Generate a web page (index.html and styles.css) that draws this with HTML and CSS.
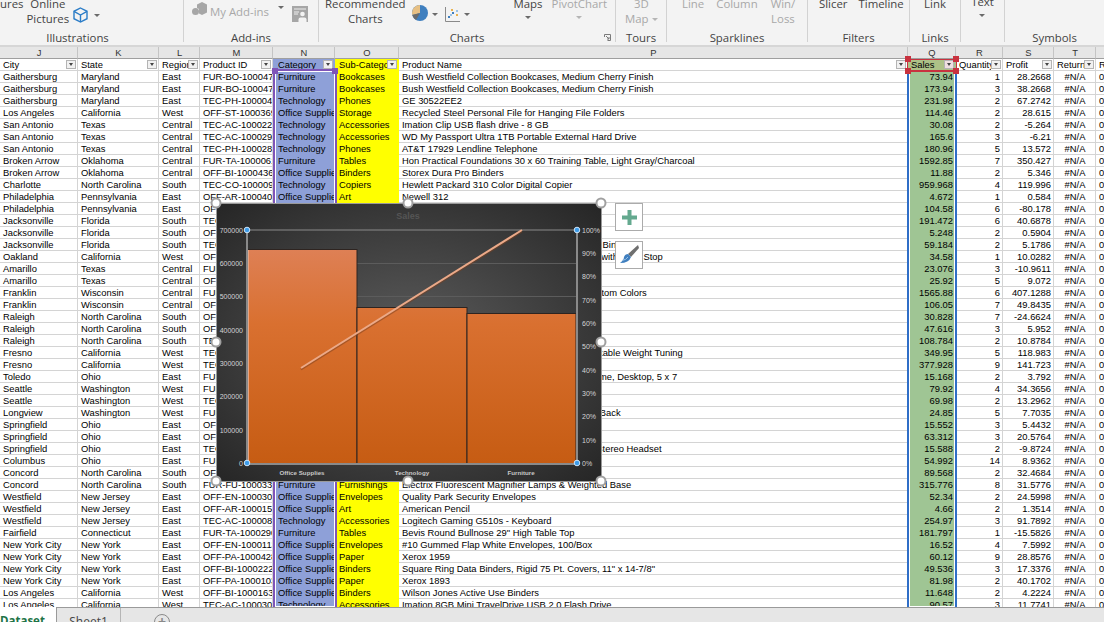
FILE: index.html
```html
<!DOCTYPE html>
<html lang="en">
<head>
    <meta charset="UTF-8">
    <title>Dataset - Excel</title>
    <link rel="stylesheet" href="styles.css">
</head>
<body>

<div class="ribbon">
    <section class="group g-illustrations">
        <div class="tools">
            <span class="tool">ures</span>
            <span class="tool online">Online<br>Pictures</span>
            <svg class="icon cube" width="15" height="16" viewBox="0 0 15 16" fill="none" stroke="#2a7cc7" stroke-width="1.4"><path d="M7.5 1 14 4.3v7.4L7.5 15 1 11.7V4.3Z"/><path d="M1 4.3 7.5 8 14 4.3M7.5 8v7"/></svg>
            <i class="caret cube-caret"></i>
        </div>
        <div class="group-name">Illustrations</div>
    </section>
    <section class="group g-addins">
        <div class="tools">
            <svg class="icon store" width="15" height="14" viewBox="0 0 15 14" fill="#a6a6a6"><circle cx="3.5" cy="9.5" r="3.5"/><path d="M5 2.5 10 0l5 2.5v8L10 13l-3-1.5V7L5 6Z"/></svg>
            <span class="tool off my-addins">My Add-ins</span>
            <i class="caret addins-caret"></i>
            <svg class="icon person" width="16" height="16" viewBox="0 0 16 16"><rect width="16" height="16" fill="#a6a6a6"/><path d="M2 3h12M2 6h5M2 8h4" stroke="#eee"/><circle cx="10.5" cy="8" r="2.3" fill="#f3f3f3"/><path d="M6.500 16v-2.500q0-2 2-2h4q2 0 2 2V16Z" fill="#f3f3f3"/></svg>
        </div>
        <div class="group-name">Add-ins</div>
    </section>
    <section class="group g-charts">
        <div class="tools">
            <span class="tool recommended">Recommended<br>Charts</span>
            <svg class="icon pie" width="16" height="16" viewBox="0 0 16 16"><circle cx="8" cy="8" r="8" fill="#3f7fbf"/><path d="M8 8V0A8 8 0 0 0 .3 10Z" fill="#e8c083"/><path d="M8 8 .3 10A8 8 0 0 0 4 15Z" fill="#6b6b6b"/></svg>
            <i class="caret pie-caret"></i>
            <svg class="icon scatter" width="15" height="15" viewBox="0 0 15 15"><path d="M.5 0v14.500H15" fill="none" stroke="#8a8a8a"/><path d="M3 9h2v2H3zM7 5h2v2H7z" fill="#3f7fbf"/><path d="M6 2h2v2H6zM11 7h2v2h-2z" fill="#e8b24f"/><path d="M11 3h2v2h-2zM5 7h2v2H5z" fill="#9cc3e6"/></svg>
            <i class="caret scatter-caret"></i>
            <span class="tool stacked maps">Maps<i class="caret"></i></span>
            <span class="tool stacked off pivot">PivotChart<i class="caret off"></i></span>
        </div>
        <div class="group-name">Charts</div>
        <svg class="launcher" width="7" height="7" viewBox="0 0 7 7" fill="none" stroke="#7a7a7a"><path d="M.5 3V.5h6v6H3.500M2 2l3 3M5 3v2H3"/></svg>
    </section>
    <section class="group g-tours">
        <div class="tools">
            <span class="tool off map3d">3D<br>Map<i class="caret off"></i></span>
        </div>
        <div class="group-name">Tours</div>
    </section>
    <section class="group g-sparklines">
        <div class="tools">
            <span class="tool off line">Line</span>
            <span class="tool off column">Column</span>
            <span class="tool off winloss">Win/<br>Loss</span>
        </div>
        <div class="group-name">Sparklines</div>
    </section>
    <section class="group g-filters">
        <div class="tools">
            <span class="tool slicer">Slicer</span>
            <span class="tool timeline">Timeline</span>
        </div>
        <div class="group-name">Filters</div>
    </section>
    <section class="group g-links">
        <div class="tools centered">
            <span class="tool">Link</span>
        </div>
        <div class="group-name">Links</div>
    </section>
    <section class="group g-text">
        <div class="tools centered">
            <span class="tool stacked up">Text<i class="caret"></i></span>
        </div>
        <div class="group-name">&nbsp;</div>
    </section>
    <section class="group g-symbols">
        <div class="tools"></div>
        <div class="group-name">Symbols</div>
    </section>
</div>

<div class="sheet">
    <table class="grid">
        <colgroup>
            <col class="c-j"><col class="c-k"><col class="c-l"><col class="c-m"><col class="c-n"><col class="c-o">
            <col class="c-p"><col class="c-q"><col class="c-r"><col class="c-s"><col class="c-t"><col class="c-u">
        </colgroup>
        <thead>
            <tr class="letters">
                <th>J</th><th>K</th><th>L</th><th>M</th><th>N</th><th>O</th><th>P</th><th>Q</th><th>R</th><th>S</th><th>T</th><th></th>
            </tr>
            <tr class="names">
                <th><div class="head"><span>City</span><i class="filter"></i></div></th>
                <th><div class="head"><span>State</span><i class="filter"></i></div></th>
                <th><div class="head"><span>Region</span><i class="filter"></i></div></th>
                <th><div class="head"><span>Product ID</span><i class="filter"></i></div></th>
                <th><div class="head"><span>Category</span><i class="filter"></i></div></th>
                <th><div class="head"><span>Sub-Category</span><i class="filter"></i></div></th>
                <th><div class="head"><span>Product Name</span><i class="filter"></i></div></th>
                <th><div class="head"><span>Sales</span><i class="filter"></i></div></th>
                <th><div class="head"><span>Quantity</span><i class="filter"></i></div></th>
                <th><div class="head"><span>Profit</span><i class="filter"></i></div></th>
                <th><div class="head"><span>Returned</span><i class="filter"></i></div></th>
                <th><div class="head"><span>Rate</span></div></th>
            </tr>
        </thead>
        <tbody>
            <tr><td>Gaithersburg</td><td>Maryland</td><td>East</td><td>FUR-BO-10004709</td><td>Furniture</td><td>Bookcases</td><td>Bush Westfield Collection Bookcases, Medium Cherry Finish</td><td>73.94</td><td>1</td><td>28.2668</td><td>#N/A</td><td>0</td></tr>
            <tr><td>Gaithersburg</td><td>Maryland</td><td>East</td><td>FUR-BO-10004709</td><td>Furniture</td><td>Bookcases</td><td>Bush Westfield Collection Bookcases, Medium Cherry Finish</td><td>173.94</td><td>3</td><td>38.2668</td><td>#N/A</td><td>0</td></tr>
            <tr><td>Gaithersburg</td><td>Maryland</td><td>East</td><td>TEC-PH-10000455</td><td>Technology</td><td>Phones</td><td>GE 30522EE2</td><td>231.98</td><td>2</td><td>67.2742</td><td>#N/A</td><td>0</td></tr>
            <tr><td>Los Angeles</td><td>California</td><td>West</td><td>OFF-ST-10003692</td><td>Office Supplies</td><td>Storage</td><td>Recycled Steel Personal File for Hanging File Folders</td><td>114.46</td><td>2</td><td>28.615</td><td>#N/A</td><td>0</td></tr>
            <tr><td>San Antonio</td><td>Texas</td><td>Central</td><td>TEC-AC-10002218</td><td>Technology</td><td>Accessories</td><td>Imation Clip USB flash drive - 8 GB</td><td>30.08</td><td>2</td><td>-5.264</td><td>#N/A</td><td>0</td></tr>
            <tr><td>San Antonio</td><td>Texas</td><td>Central</td><td>TEC-AC-10002942</td><td>Technology</td><td>Accessories</td><td>WD My Passport Ultra 1TB Portable External Hard Drive</td><td>165.6</td><td>3</td><td>-6.21</td><td>#N/A</td><td>0</td></tr>
            <tr><td>San Antonio</td><td>Texas</td><td>Central</td><td>TEC-PH-10002890</td><td>Technology</td><td>Phones</td><td>AT&amp;T 17929 Lendline Telephone</td><td>180.96</td><td>5</td><td>13.572</td><td>#N/A</td><td>0</td></tr>
            <tr><td>Broken Arrow</td><td>Oklahoma</td><td>Central</td><td>FUR-TA-10000617</td><td>Furniture</td><td>Tables</td><td>Hon Practical Foundations 30 x 60 Training Table, Light Gray/Charcoal</td><td>1592.85</td><td>7</td><td>350.427</td><td>#N/A</td><td>0</td></tr>
            <tr><td>Broken Arrow</td><td>Oklahoma</td><td>Central</td><td>OFF-BI-10004364</td><td>Office Supplies</td><td>Binders</td><td>Storex Dura Pro Binders</td><td>11.88</td><td>2</td><td>5.346</td><td>#N/A</td><td>0</td></tr>
            <tr><td>Charlotte</td><td>North Carolina</td><td>South</td><td>TEC-CO-10000971</td><td>Technology</td><td>Copiers</td><td>Hewlett Packard 310 Color Digital Copier</td><td>959.968</td><td>4</td><td>119.996</td><td>#N/A</td><td>0</td></tr>
            <tr><td>Philadelphia</td><td>Pennsylvania</td><td>East</td><td>OFF-AR-10004078</td><td>Office Supplies</td><td>Art</td><td>Newell 312</td><td>4.672</td><td>1</td><td>0.584</td><td>#N/A</td><td>0</td></tr>
            <tr><td>Philadelphia</td><td>Pennsylvania</td><td>East</td><td>OFF-BI-10003291</td><td>Office Supplies</td><td>Binders</td><td></td><td>104.58</td><td>6</td><td>-80.178</td><td>#N/A</td><td>0</td></tr>
            <tr><td>Jacksonville</td><td>Florida</td><td>South</td><td>TEC-PH-10002033</td><td>Technology</td><td>Phones</td><td></td><td>191.472</td><td>6</td><td>40.6878</td><td>#N/A</td><td>0</td></tr>
            <tr><td>Jacksonville</td><td>Florida</td><td>South</td><td>OFF-AR-10001868</td><td>Office Supplies</td><td>Art</td><td></td><td>5.248</td><td>2</td><td>0.5904</td><td>#N/A</td><td>0</td></tr>
            <tr><td>Jacksonville</td><td>Florida</td><td>South</td><td>TEC-AC-10004353</td><td>Technology</td><td>Accessories</td><td>Plantronics Savi W720-M Multi-Device Wireless Binaural</td><td>59.184</td><td>2</td><td>5.1786</td><td>#N/A</td><td>0</td></tr>
            <tr><td>Oakland</td><td>California</td><td>West</td><td>OFF-AP-10002203</td><td>Office Supplies</td><td>Appliances</td><td>Eldon Fold 'N Roll Cart Storage System Unit 14 with Door Stop</td><td>34.58</td><td>1</td><td>10.0282</td><td>#N/A</td><td>0</td></tr>
            <tr><td>Amarillo</td><td>Texas</td><td>Central</td><td>FUR-FU-10001967</td><td>Furniture</td><td>Furnishings</td><td></td><td>23.076</td><td>3</td><td>-10.9611</td><td>#N/A</td><td>0</td></tr>
            <tr><td>Amarillo</td><td>Texas</td><td>Central</td><td>OFF-PA-10002377</td><td>Office Supplies</td><td>Paper</td><td></td><td>25.92</td><td>5</td><td>9.072</td><td>#N/A</td><td>0</td></tr>
            <tr><td>Franklin</td><td>Wisconsin</td><td>Central</td><td>FUR-CH-10004218</td><td>Furniture</td><td>Chairs</td><td>Global Deluxe Tall Stacking Chair, Assorted Custom Colors</td><td>1565.88</td><td>6</td><td>407.1288</td><td>#N/A</td><td>0</td></tr>
            <tr><td>Franklin</td><td>Wisconsin</td><td>Central</td><td>OFF-ST-10001469</td><td>Office Supplies</td><td>Storage</td><td></td><td>106.05</td><td>7</td><td>49.8435</td><td>#N/A</td><td>0</td></tr>
            <tr><td>Raleigh</td><td>North Carolina</td><td>South</td><td>OFF-PA-10000474</td><td>Office Supplies</td><td>Paper</td><td></td><td>30.828</td><td>7</td><td>-24.6624</td><td>#N/A</td><td>0</td></tr>
            <tr><td>Raleigh</td><td>North Carolina</td><td>South</td><td>OFF-LA-10003930</td><td>Office Supplies</td><td>Labels</td><td></td><td>47.616</td><td>3</td><td>5.952</td><td>#N/A</td><td>0</td></tr>
            <tr><td>Raleigh</td><td>North Carolina</td><td>South</td><td>TEC-PH-10001530</td><td>Technology</td><td>Phones</td><td></td><td>108.784</td><td>2</td><td>10.8784</td><td>#N/A</td><td>0</td></tr>
            <tr><td>Fresno</td><td>California</td><td>West</td><td>TEC-AC-10000710</td><td>Technology</td><td>Accessories</td><td>Logitech G500 Laser Gaming Mouse with Adjustable Weight Tuning</td><td>349.95</td><td>5</td><td>118.983</td><td>#N/A</td><td>0</td></tr>
            <tr><td>Fresno</td><td>California</td><td>West</td><td>TEC-PH-10004093</td><td>Technology</td><td>Phones</td><td></td><td>377.928</td><td>9</td><td>141.723</td><td>#N/A</td><td>0</td></tr>
            <tr><td>Toledo</td><td>Ohio</td><td>East</td><td>FUR-FU-10004351</td><td>Furniture</td><td>Furnishings</td><td>Tensor Brushed Steel A4 Document Picture Frame, Desktop, 5 x 7</td><td>15.168</td><td>2</td><td>3.792</td><td>#N/A</td><td>0</td></tr>
            <tr><td>Seattle</td><td>Washington</td><td>West</td><td>FUR-FU-10002671</td><td>Furniture</td><td>Furnishings</td><td></td><td>79.92</td><td>4</td><td>34.3656</td><td>#N/A</td><td>0</td></tr>
            <tr><td>Seattle</td><td>Washington</td><td>West</td><td>TEC-AC-10001838</td><td>Technology</td><td>Accessories</td><td></td><td>69.98</td><td>2</td><td>13.2962</td><td>#N/A</td><td>0</td></tr>
            <tr><td>Longview</td><td>Washington</td><td>West</td><td>FUR-FU-10000246</td><td>Furniture</td><td>Furnishings</td><td>Anti-Static Chairmat with Studded Ribbed Vinyl Back</td><td>24.85</td><td>5</td><td>7.7035</td><td>#N/A</td><td>0</td></tr>
            <tr><td>Springfield</td><td>Ohio</td><td>East</td><td>OFF-PA-10001560</td><td>Office Supplies</td><td>Paper</td><td></td><td>15.552</td><td>3</td><td>5.4432</td><td>#N/A</td><td>0</td></tr>
            <tr><td>Springfield</td><td>Ohio</td><td>East</td><td>OFF-EN-10002986</td><td>Office Supplies</td><td>Envelopes</td><td></td><td>63.312</td><td>3</td><td>20.5764</td><td>#N/A</td><td>0</td></tr>
            <tr><td>Springfield</td><td>Ohio</td><td>East</td><td>TEC-AC-10001432</td><td>Technology</td><td>Accessories</td><td>Plantronics Voyager Focus UC USB Bluetooth Stereo Headset</td><td>15.588</td><td>2</td><td>-9.8724</td><td>#N/A</td><td>0</td></tr>
            <tr><td>Columbus</td><td>Ohio</td><td>East</td><td>FUR-FU-10000758</td><td>Furniture</td><td>Furnishings</td><td></td><td>54.992</td><td>14</td><td>8.9362</td><td>#N/A</td><td>0</td></tr>
            <tr><td>Concord</td><td>North Carolina</td><td>South</td><td>OFF-BI-10001524</td><td>Office Supplies</td><td>Binders</td><td></td><td>89.568</td><td>2</td><td>32.4684</td><td>#N/A</td><td>0</td></tr>
            <tr><td>Concord</td><td>North Carolina</td><td>South</td><td>FUR-FU-10003373</td><td>Furniture</td><td>Furnishings</td><td>Electrix Fluorescent Magnifier Lamps &amp; Weighted Base</td><td>315.776</td><td>8</td><td>31.5776</td><td>#N/A</td><td>0</td></tr>
            <tr><td>Westfield</td><td>New Jersey</td><td>East</td><td>OFF-EN-10003040</td><td>Office Supplies</td><td>Envelopes</td><td>Quality Park Security Envelopes</td><td>52.34</td><td>2</td><td>24.5998</td><td>#N/A</td><td>0</td></tr>
            <tr><td>Westfield</td><td>New Jersey</td><td>East</td><td>OFF-AR-10001573</td><td>Office Supplies</td><td>Art</td><td>American Pencil</td><td>4.66</td><td>2</td><td>1.3514</td><td>#N/A</td><td>0</td></tr>
            <tr><td>Westfield</td><td>New Jersey</td><td>East</td><td>TEC-AC-10000844</td><td>Technology</td><td>Accessories</td><td>Logitech Gaming G510s - Keyboard</td><td>254.97</td><td>3</td><td>91.7892</td><td>#N/A</td><td>0</td></tr>
            <tr><td>Fairfield</td><td>Connecticut</td><td>East</td><td>FUR-TA-10002903</td><td>Furniture</td><td>Tables</td><td>Bevis Round Bullnose 29" High Table Top</td><td>181.797</td><td>1</td><td>-15.5826</td><td>#N/A</td><td>0</td></tr>
            <tr><td>New York City</td><td>New York</td><td>East</td><td>OFF-EN-10001137</td><td>Office Supplies</td><td>Envelopes</td><td>#10 Gummed Flap White Envelopes, 100/Box</td><td>16.52</td><td>4</td><td>7.5992</td><td>#N/A</td><td>0</td></tr>
            <tr><td>New York City</td><td>New York</td><td>East</td><td>OFF-PA-10004285</td><td>Office Supplies</td><td>Paper</td><td>Xerox 1959</td><td>60.12</td><td>9</td><td>28.8576</td><td>#N/A</td><td>0</td></tr>
            <tr><td>New York City</td><td>New York</td><td>East</td><td>OFF-BI-10002225</td><td>Office Supplies</td><td>Binders</td><td>Square Ring Data Binders, Rigid 75 Pt. Covers, 11" x 14-7/8"</td><td>49.536</td><td>3</td><td>17.3376</td><td>#N/A</td><td>0</td></tr>
            <tr><td>New York City</td><td>New York</td><td>East</td><td>OFF-PA-10001033</td><td>Office Supplies</td><td>Paper</td><td>Xerox 1893</td><td>81.98</td><td>2</td><td>40.1702</td><td>#N/A</td><td>0</td></tr>
            <tr><td>Los Angeles</td><td>California</td><td>West</td><td>OFF-BI-10001634</td><td>Office Supplies</td><td>Binders</td><td>Wilson Jones Active Use Binders</td><td>11.648</td><td>2</td><td>4.2224</td><td>#N/A</td><td>0</td></tr>
            <tr><td>Los Angeles</td><td>California</td><td>West</td><td>TEC-AC-10003027</td><td>Technology</td><td>Accessories</td><td>Imation 8GB Mini TravelDrive USB 2.0 Flash Drive</td><td>90.57</td><td>3</td><td>11.7741</td><td>#N/A</td><td>0</td></tr>
        </tbody>
    </table>

    <!-- formula reference highlights -->
    <div class="ref ref-category"><i class="grip grip-l"></i><i class="grip grip-r"></i></div>
    <div class="ref ref-sales"></div>
    <div class="ref-head"><i class="grip grip-tl"></i><i class="grip grip-tr"></i><i class="grip grip-l"></i><i class="grip grip-r"></i></div>

    <svg class="chart" width="386" height="279" viewBox="0 0 386 279">
        <defs>
            <radialGradient id="chartBg" cx="50%" cy="50%" r="70%">
                <stop offset="0" stop-color="#5c5c5c"/>
                <stop offset="1" stop-color="#262626"/>
            </radialGradient>
            <linearGradient id="barFill" gradientUnits="userSpaceOnUse" x1="0" y1="46" x2="0" y2="260">
                <stop offset="0" stop-color="#de8055"/>
                <stop offset="0.35" stop-color="#d97030"/>
                <stop offset="1" stop-color="#c65c13"/>
            </linearGradient>
        </defs>
        <rect x="0.5" y="0.5" width="385" height="278" rx="3" fill="url(#chartBg)" stroke="#9a9a9a"/>
        <text class="chart-title" x="192" y="16" text-anchor="middle">Sales</text>
        <path d="M31 60.5h330M31 93.5h330M31 127h330M31 160h330M31 193.5h330M31 227h330" stroke="#5c5c5c"/>
        <path d="M31 27h330" stroke="#8a8a8a"/>
        <rect x="31" y="46.5" width="110" height="214" fill="url(#barFill)" stroke="#2e2420"/>
        <rect x="141" y="104.5" width="110" height="156" fill="url(#barFill)" stroke="#2e2420"/>
        <rect x="251" y="110.5" width="109" height="150" fill="url(#barFill)" stroke="#2e2420"/>
        <path d="M32.500 47v212" stroke="#e6a585"/>
        <path d="M31 27V261H361V27" fill="none" stroke="#8a8a8a" stroke-width="2"/>
        <path d="M85 166.500 306 28.500" stroke="#7a4020" stroke-width="2" opacity="0.5"/>
        <path d="M85 165 306 27" stroke="#eba988" stroke-width="2"/>
        <g class="axis-label" text-anchor="end">
            <text x="27" y="30">700000</text><text x="27" y="63">600000</text><text x="27" y="96">500000</text><text x="27" y="130">400000</text>
            <text x="27" y="163">300000</text><text x="27" y="196">200000</text><text x="27" y="230">100000</text><text x="27" y="263">0</text>
        </g>
        <g class="axis-label">
            <text x="366" y="30">100%</text><text x="366" y="53">90%</text><text x="366" y="76">80%</text><text x="366" y="100">70%</text><text x="366" y="123">60%</text><text x="366" y="146">50%</text>
            <text x="366" y="170">40%</text><text x="366" y="193">30%</text><text x="366" y="216">20%</text><text x="366" y="240">10%</text><text x="366" y="263">0%</text>
        </g>
        <g class="cat-label" text-anchor="middle">
            <text x="86" y="272">Office Supplies</text><text x="196" y="272">Technology</text><text x="305" y="272">Furniture</text>
        </g>
        <g fill="#3d9be8" stroke="#cfe6fa">
            <circle cx="31" cy="27" r="2.8"/><circle cx="361" cy="27" r="2.8"/><circle cx="31" cy="260" r="2.8"/><circle cx="361" cy="260" r="2.8"/>
        </g>
        <g fill="#fff" stroke="#a0a0a0" stroke-width="2">
            <circle cx="0" cy="0" r="4.500"/><circle cx="192" cy="0" r="4.500"/><circle cx="385" cy="0" r="4.500"/>
            <circle cx="0" cy="139" r="4.500"/><circle cx="385" cy="139" r="4.500"/>
            <circle cx="0" cy="278" r="4.500"/><circle cx="192" cy="278" r="4.500"/><circle cx="385" cy="278" r="4.500"/>
        </g>
    </svg>

    <div class="chart-btn btn-plus">
        <svg width="15" height="15" viewBox="0 0 15 15" fill="#64a98f"><path d="M5.500 0h4v5.500H15v4H9.500V15h-4V9.500H0v-4h5.500Z"/></svg>
    </div>
    <div class="chart-btn btn-brush">
        <svg width="20" height="20" viewBox="0 0 20 20"><path d="M19 0 20 3 12 12 9 9Z" fill="#6f6f6f"/><path d="M9 9 12 12Q10 18 1 18 5 15 5 12 6 9 9 9Z" fill="#3f7fbf"/><path d="M3 15.500Q7 15 9 12" stroke="#9cc3e6" fill="none"/></svg>
    </div>
</div>

<div class="tabs">
    <div class="tab active">Dataset</div>
    <div class="tab">Sheet1</div>
    <div class="add-sheet">+</div>
</div>

</body>
</html>
```

FILE: styles.css
```css
body {
    margin: 0;
    height: 622px;
    overflow: hidden;
    background: #fff;
    font-family: "Liberation Sans", Arial, sans-serif;
    color: #000;
}

/* ribbon */
.ribbon {
    display: flex;
    height: 47px;
    box-sizing: border-box;
    background: #f3f3f3;
    border-bottom: 2px solid #d6d6d6;
    font-family: "Open Sans", sans-serif;
    font-size: 11.4px;
    color: #444;
    overflow: hidden;
}
.group {
    position: relative;
    display: flex;
    flex-direction: column;
    flex: none;
    height: 42px;
    box-sizing: border-box;
    border-right: 1px solid #d2d2d2;
}
.g-illustrations { width: 212px; margin-left: -28px; }
.g-illustrations .tools { padding-left: 28px; }
.g-addins { width: 135px; }
.g-charts { width: 297px; }
.g-tours { width: 51px; }
.g-sparklines { width: 141px; }
.g-filters { width: 102px; }
.g-links { width: 51px; }
.g-text { width: 44px; }
.g-symbols { flex: 1; border-right: 0; }
.tools {
    flex: 1;
    display: flex;
    align-items: flex-start;
    margin-top: -4px;
    line-height: 15px;
    min-height: 0;
}
.tools.centered { justify-content: center; }
.group-name {
    height: 11px;
    line-height: 13px;
    text-align: center;
}
.tool {
    text-align: center;
    white-space: nowrap;
}
.tool.off { color: #a8a8a8; }
.tool.stacked {
    display: flex;
    flex-direction: column;
    align-items: center;
}
.tool.stacked .caret { margin-top: 5px; }
.tool.up { margin-top: -2px; }
.caret {
    display: inline-block;
    width: 0;
    height: 0;
    border-left: 3px solid transparent;
    border-right: 3px solid transparent;
    border-top: 3px solid #6a6a6a;
}
.caret.off { border-top-color: #b5b5b5; }
.icon { flex: none; }

.online { margin-left: 3px; }
.cube { margin: 11px 0 0 4px; }
.cube-caret { margin: 18px 0 0 6px; }
.store { margin: 6px 0 0 8px; }
.my-addins { margin: 8px 0 0 3px; }
.addins-caret { margin: 10px 0 0 9px; }
.person { margin: 10px 0 0 8px; }
.recommended { margin-left: 6px; }
.pie { margin: 9px 0 0 6px; }
.pie-caret { margin: 17px 0 0 4px; }
.scatter { margin: 11px 0 0 7px; }
.scatter-caret { margin: 17px 0 0 4px; }
.maps { margin-left: 44px; }
.pivot { margin-left: 9px; }
.launcher { position: absolute; right: 4px; bottom: 1px; }
.map3d { margin-left: 9px; }
.map3d .caret { margin-left: 3px; vertical-align: middle; }
.line { margin-left: 15px; }
.column { margin-left: 12px; }
.winloss { margin-left: 13px; }
.slicer { margin-left: 11px; }
.timeline { margin-left: 11px; }

/* sheet */
.sheet {
    position: relative;
    height: 560px;
    overflow: hidden;
}
.grid {
    table-layout: fixed;
    width: 1156px;
    border-collapse: separate;
    border-spacing: 0;
    font-size: 9.4px;
}
.c-j { width: 78px; }
.c-k { width: 81px; }
.c-l { width: 41px; }
.c-m { width: 73px; }
.c-n { width: 62px; }
.c-o { width: 64px; }
.c-p { width: 509px; }
.c-q { width: 48px; }
.c-r { width: 47px; }
.c-s { width: 51px; }
.c-t { width: 42px; }
.c-u { width: 60px; }

.grid th, .grid td {
    height: 12px;
    box-sizing: border-box;
    padding: 0 2px 0 3px;
    line-height: 11px;
    border-right: 1px solid #d4d4d4;
    border-bottom: 1px solid #d4d4d4;
    overflow: hidden;
    white-space: nowrap;
    text-align: left;
    font-weight: normal;
}
.letters th {
    background: #e6e6e6;
    border-right-color: #c4c4c4;
    border-bottom-color: #9f9f9f;
    text-align: center;
    color: #333;
}
.names th { padding: 0 1px 0 3px; }
.head {
    display: flex;
    align-items: center;
}
.head span {
    flex: 1;
    min-width: 0;
    overflow: hidden;
}
.filter {
    position: relative;
    flex: none;
    width: 10px;
    height: 9px;
    box-sizing: border-box;
    background: #f1f1f1;
    border: 1px solid #b4b4b4;
}
.filter::after {
    content: "";
    position: absolute;
    left: 2px;
    top: 2px;
    border-left: 2px solid transparent;
    border-right: 2px solid transparent;
    border-top: 3px solid #444;
}

/* coloured columns */
.names th:nth-child(5), .grid td:nth-child(5) {
    background: #8ea0d8;
    border-color: #8ea0d8;
}
.names th:nth-child(6), .grid td:nth-child(6) {
    background: #ff0;
    border-color: #ff0;
}
.grid td:nth-child(6) { padding-left: 4px; }
.names th:nth-child(5) { padding-left: 5px; }
.names th:nth-child(6) { padding-left: 4px; }
.names th:nth-child(8), .grid td:nth-child(8) {
    background: #9fc594;
    border-color: #9fc594;
}
.names th:nth-child(8) { background: #adc187; }
.names th:nth-child(8) .filter { background: #f0dfe2; }
.grid td:nth-child(8), .grid td:nth-child(9), .grid td:nth-child(10) { text-align: right; }
.grid td:nth-child(11) { text-align: center; }
.grid td:nth-child(5) { padding-left: 5px; }

/* reference highlights */
.ref {
    position: absolute;
    bottom: 0;
    box-sizing: border-box;
    box-shadow: inset 0 0 0 1px #fff;
}
.ref-category {
    left: 273px;
    top: 22px;
    width: 64px;
    border: 2px solid #7f55b8;
    border-bottom: 0;
}
.ref-sales {
    left: 907px;
    top: 24px;
    width: 50px;
    border-left: 2px solid #2f6ec7;
    border-right: 2px solid #2f6ec7;
}
.ref-head {
    position: absolute;
    left: 907px;
    top: 12px;
    width: 50px;
    height: 13px;
    box-sizing: border-box;
    border: 1px solid #c8323f;
    border-bottom-width: 2px;
}
.grip {
    position: absolute;
    width: 6px;
    height: 6px;
    background: #7f55b8;
}
.ref-category .grip { top: -3px; }
.ref-category .grip-l { left: -3px; }
.ref-category .grip-r { right: -3px; }
.ref-head .grip { background: #c8323f; }
.ref-head .grip-l { left: -3px; bottom: -4px; }
.ref-head .grip-r { right: -3px; bottom: -4px; }
.ref-head .grip-tl { left: -3px; top: -4px; }
.ref-head .grip-tr { right: -3px; top: -4px; }

/* chart */
.chart {
    position: absolute;
    left: 216px;
    top: 156px;
    overflow: visible;
}
.chart-title {
    font-size: 9px;
    font-weight: bold;
    fill: #555;
}
.axis-label {
    font-size: 7px;
    fill: #d4d4d4;
}
.cat-label {
    font-size: 6.2px;
    font-weight: bold;
    fill: #c8c8c8;
}
.chart-btn {
    position: absolute;
    left: 615px;
    width: 28px;
    height: 28px;
    box-sizing: border-box;
    display: flex;
    align-items: center;
    justify-content: center;
    background: #fff;
    border: 1px solid #ababab;
}
.btn-plus { top: 156px; }
.btn-brush { top: 194px; }

/* sheet tabs */
.tabs {
    display: flex;
    height: 15px;
    box-sizing: border-box;
    background: #e6e6e6;
    border-top: 1px solid #9a9a9a;
    font-family: "Open Sans", sans-serif;
    font-size: 12px;
    line-height: 27px;
    color: #444;
}
.tab {
    width: 63px;
    height: 15px;
    overflow: hidden;
    text-align: center;
    border-right: 1px solid #b5b5b5;
}
.tab.active {
    width: 56px;
    margin-top: -1px;
    background: #fff;
    color: #217346;
    font-size: 11.5px;
    font-weight: bold;
    text-align: left;
    border-right: 1px solid #9a9a9a;
}
.add-sheet {
    width: 16px;
    height: 16px;
    margin: 6px 0 0 33px;
    box-sizing: border-box;
    border: 1px solid #8a8a8a;
    border-radius: 50%;
    text-align: center;
    line-height: 13px;
    font-size: 14px;
    font-weight: bold;
    color: #8a8a8a;
}
```
